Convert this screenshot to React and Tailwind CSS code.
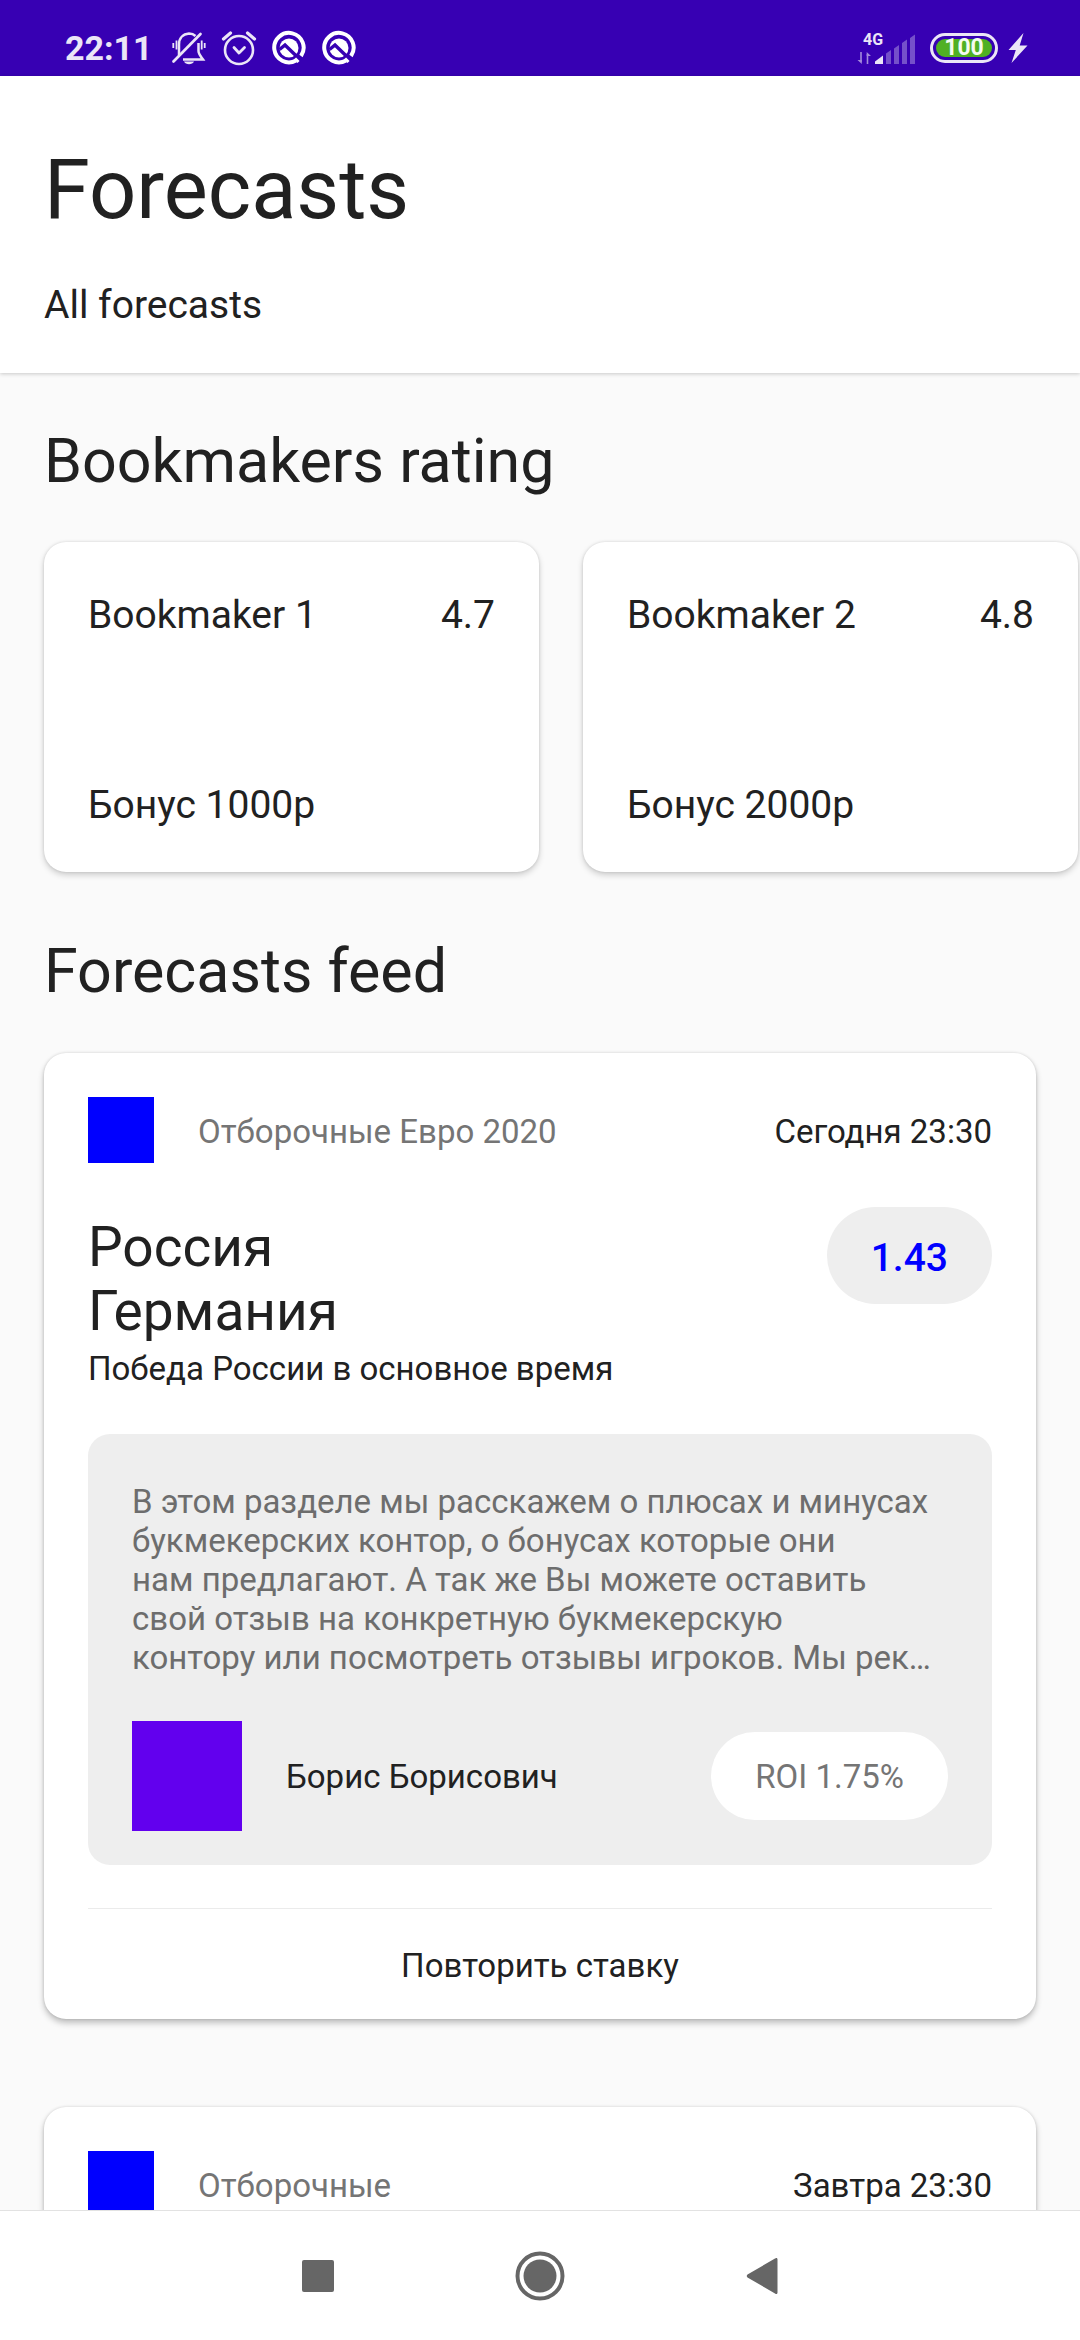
const bookmakers = [
  { name: "Bookmaker 1", rating: "4.7", bonus: "Бонус 1000р" },
  { name: "Bookmaker 2", rating: "4.8", bonus: "Бонус 2000р" },
];

const review = [
  "В этом разделе мы расскажем о плюсах и минусах",
  "букмекерских контор, о бонусах которые они",
  "нам предлагают. А так же Вы можете оставить",
  "свой отзыв на конкретную букмекерскую",
  "контору или посмотреть отзывы игроков. Мы рек…",
].join("\n");

const forecasts = [
  {
    league: "Отборочные Евро 2020",
    time: "Сегодня 23:30",
    home: "Россия",
    away: "Германия",
    bet: "Победа России в основное время",
    odds: "1.43",
    author: "Борис Борисович",
    roi: "ROI 1.75%",
  },
  {
    league: "Отборочные",
    time: "Завтра 23:30",
  },
];

function BellOffIcon() {
  return (
    <svg className="h-9 w-9" viewBox="0 0 36 36" fill="none" stroke="currentColor" strokeWidth="2.5" aria-hidden="true">
      <path d="M8 25V14.500C8 8 12 4 18 3.500c3 0 5 1 6.500 2.500" />
      <path d="M27.500 13v8c0 3 2 5 4.500 8.500H12" />
      <path d="M2.500 31.500 29.500 4" strokeLinecap="round" strokeWidth="2.700" />
      <path d="M2.300 13v5M5.500 10.500v9M33.700 13v5M30.700 10.500v9" strokeWidth="1.800" />
      <path d="M13 31.500h10c-1.500 3.500-8.500 3.500-10 0Z" fill="currentColor" stroke="none" />
    </svg>
  );
}

function AlarmIcon() {
  return (
    <svg className="h-9 w-9" viewBox="0 0 36 36" fill="none" stroke="currentColor" strokeLinecap="round" aria-hidden="true">
      <circle cx="18" cy="20" r="14" strokeWidth="2.600" />
      <path d="m13 17.500 5 5.500 5.500-5.500" strokeWidth="2.800" strokeLinejoin="round" />
      <path d="m2.500 9 7-6M33.500 9l-7-6" strokeWidth="3.200" />
    </svg>
  );
}

function QIcon() {
  return (
    <svg className="h-9 w-9" viewBox="0 0 36 36" fill="none" aria-hidden="true">
      <path d="M25 30.500A14.700 14.700 0 1 1 30 26" stroke="white" strokeWidth="4" />
      <circle cx="18" cy="18" r="9.500" fill="white" />
      <path d="m8.500 19.500 5.500-4.500 16 15.500" stroke="#3700b3" strokeWidth="3.500" />
      <path d="m24 28.500 3.500 3.500" stroke="white" strokeWidth="3" />
    </svg>
  );
}

function SignalIcon() {
  return (
    <svg className="h-9 w-[60px]" viewBox="0 0 60 36" fill="currentColor" aria-hidden="true">
      <text x="6" y="15" fontSize="16" fontWeight="700">4G</text>
      <g opacity="0.6">
        <path d="M4 22v10M10.500 34V24" fill="none" stroke="currentColor" strokeWidth="1.600" />
        <path d="M4.800 34 .5 30h4.300ZM9.700 22l4.300 4H9.700Z" />
      </g>
      <path d="M18 31.500l8-6V34h-8Z" />
      <g opacity="0.35">
        <path d="M29 23.500l5-3.500v14h-5ZM37 18.500l5-3.500v19h-5ZM45 13l5-3.500V34h-5ZM53 8l5-3.500V34h-5Z" />
      </g>
    </svg>
  );
}

function StatusBar() {
  return (
    <div className="flex h-[76px] shrink-0 items-end justify-between bg-[#3700b3] pr-[52px] pl-[65px] text-[#ebe5f7]">
      <div className="flex h-14 items-center gap-[14px]">
        <span className="mr-1 text-[34px] leading-9 font-bold">22:11</span>
        <BellOffIcon />
        <AlarmIcon />
        <QIcon />
        <QIcon />
      </div>
      <div className="flex h-14 items-center">
        <SignalIcon />
        <div className="ml-[13px] flex h-[30px] w-[68px] items-center justify-center rounded-full border-[3px] border-[#ebe5f7]">
          <div className="flex h-[18px] w-14 items-center justify-center rounded-full bg-[#50b024] text-[23px] leading-6 font-bold text-[#f4fbf0]">
            100
          </div>
        </div>
        <svg className="ml-[10px] h-[30px] w-5" viewBox="0 0 20 30" fill="currentColor" aria-hidden="true">
          <path d="M15.500 0 .5 17h7.300L3.500 30 19.500 12.500h-7.800Z" />
        </svg>
      </div>
    </div>
  );
}

function BookmakerCard({ name, rating, bonus }) {
  return (
    <li className="flex h-[330px] w-[495px] shrink-0 flex-col justify-between rounded-[22px] bg-white px-11 pt-[50px] pb-11 text-[39px] leading-[46px] shadow-[0_3px_6px_rgba(0,0,0,0.18),0_0_3px_rgba(0,0,0,0.12)]">
      <div className="flex justify-between">
        <span>{name}</span>
        <span>{rating}</span>
      </div>
      <p>{bonus}</p>
    </li>
  );
}

function ForecastDetails({ item }) {
  return (
    <>
      <div className="mt-11 flex items-start justify-between">
        <div className="pt-2">
          <h3 className="text-[55px] leading-[64px]">
            {item.home}
            <br />
            {item.away}
          </h3>
          <p className="mt-[6px]">{item.bet}</p>
        </div>
        <button className="h-[97px] rounded-full bg-[#eeeeee] px-11 pt-1 text-[39px] leading-[46px] font-medium text-[#0000ff]">
          {item.odds}
        </button>
      </div>
      <div className="mt-[46px] rounded-[22px] bg-[#eeeeee] px-11 pt-12 pb-[34px]">
        <p className="whitespace-pre-line text-[#6d6d6d]">{review}</p>
        <div className="mt-11 flex items-center">
          <div className="mr-11 size-[110px] bg-[#6200ee]" />
          <span className="grow">{item.author}</span>
          <span className="flex h-[88px] items-center rounded-full bg-white px-11 text-[#757575]">{item.roi}</span>
        </div>
      </div>
      <div className="mt-[43px] border-t border-[#ebebeb]">
        <button className="h-[110px] w-full pt-[2px]">Повторить ставку</button>
      </div>
    </>
  );
}

function ForecastCard({ item }) {
  return (
    <article className="rounded-[22px] bg-white px-11 pt-11 text-[33px] leading-[39px] shadow-[0_4px_6px_rgba(0,0,0,0.24),0_0_3px_rgba(0,0,0,0.14)]">
      <div className="flex items-center">
        <div className="mr-11 size-[66px] bg-[#0000ff]" />
        <span className="grow pt-[2px] text-[#757575]">{item.league}</span>
        <time className="pt-[2px]">{item.time}</time>
      </div>
      {item.odds ? <ForecastDetails item={item} /> : <div className="h-11" />}
    </article>
  );
}

function NavigationBar() {
  return (
    <nav className="flex h-[130px] shrink-0 items-center justify-center gap-[150px] border-t border-[#e2e2e2] bg-white text-[#666666]">
      <button aria-label="Recent apps" className="flex size-[72px] items-center justify-center">
        <span className="size-8 rounded-[2px] bg-[#666666]" />
      </button>
      <button aria-label="Home" className="flex size-[72px] items-center justify-center">
        <svg className="size-[50px]" viewBox="0 0 50 50" fill="currentColor" aria-hidden="true">
          <circle cx="25" cy="25" r="22.500" fill="none" stroke="currentColor" strokeWidth="4" />
          <circle cx="25" cy="25" r="16.500" />
        </svg>
      </button>
      <button aria-label="Back" className="flex size-[72px] items-center justify-center">
        <svg className="h-[38px] w-8" viewBox="0 0 32 38" fill="currentColor" aria-hidden="true">
          <path d="M29 1.500c1.500-1 2.500-.5 2.500 1v33c0 1.500-1 2-2.500 1L1.500 20.500c-1-.8-1-2.200 0-3Z" />
        </svg>
      </button>
    </nav>
  );
}

export default function App() {
  return (
    <div className="flex h-screen flex-col overflow-hidden bg-[#fafafa] font-['Roboto',sans-serif] text-[#212121]">
      <StatusBar />
      <header className="relative shrink-0 bg-white px-11 pt-[66px] pb-[45px] shadow-[0_1px_4px_rgba(0,0,0,0.2)]">
        <h1 className="text-[83px] leading-[96px]">Forecasts</h1>
        <p className="mt-11 text-[39px] leading-[46px]">All forecasts</p>
      </header>
      <main className="min-h-0 grow overflow-y-auto [scrollbar-width:none]">
        <h2 className="mt-[53px] px-11 text-[61px] leading-[71px]">Bookmakers rating</h2>
        <ul className="mt-[1px] flex gap-11 overflow-x-auto px-11 pt-11 pb-5 [scrollbar-width:none]">
          {bookmakers.map((b) => (
            <BookmakerCard key={b.name} {...b} />
          ))}
        </ul>
        <h2 className="mt-11 px-11 text-[61px] leading-[71px]">Forecasts feed</h2>
        <div className="mt-[46px] flex flex-col gap-[88px] px-11 pb-11">
          {forecasts.map((item) => (
            <ForecastCard key={item.league} item={item} />
          ))}
        </div>
      </main>
      <NavigationBar />
    </div>
  );
}
